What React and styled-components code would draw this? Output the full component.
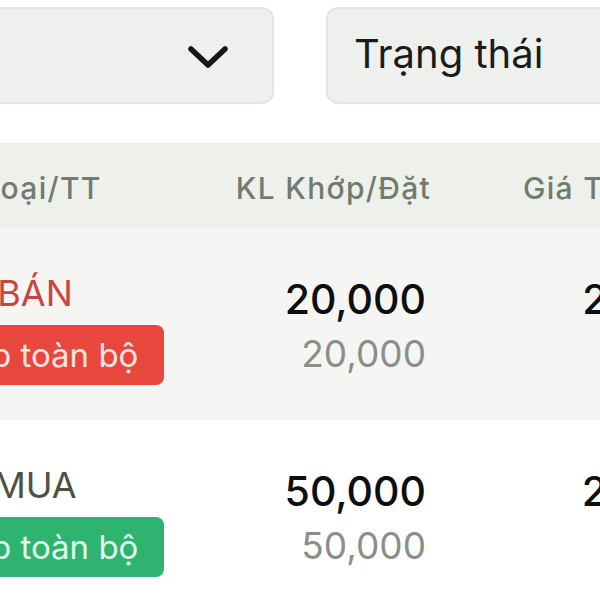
import React from 'react';
import styled, { createGlobalStyle } from 'styled-components';

const GlobalStyle = createGlobalStyle`
  html, body {
    margin: 0;
    padding: 0;
    background: #fff;
  }
  body {
    font-family: Inter, "Noto Sans", "DejaVu Sans", sans-serif;
    overflow: hidden;
  }
`;

const orders = [
  { side: 'BÁN', type: 'sell', matched: '20,000', placed: '20,000', price: '25,500', priceSub: '25,500', status: 'Khớp toàn bộ' },
  { side: 'MUA', type: 'buy', matched: '50,000', placed: '50,000', price: '24,800', priceSub: '24,800', status: 'Khớp toàn bộ' },
];

const App = () => {
  return (
    <>
      <GlobalStyle />
      <Screen>
        <Filters>
          <Select>
            <Chevron viewBox="0 0 40 24">
              <polyline points="3,4 20,20 37,4" />
            </Chevron>
          </Select>
          <Select $wide>
            <SelectText>Trạng thái</SelectText>
          </Select>
        </Filters>

        <Table>
          <HeadRow>
            <HeadCell $align="center">Loại/TT</HeadCell>
            <HeadCell $align="right" $pull>KL Khớp/Đặt</HeadCell>
            <HeadCell $align="left" $indent={97}>Giá TB/Đặt</HeadCell>
          </HeadRow>

          {orders.map((o, i) => (
            <Row key={i} $striped={i % 2 === 0}>
              <SideCell>
                <Side $type={o.type}>{o.side}</Side>
                <Badge $type={o.type}>{o.status}</Badge>
              </SideCell>
              <NumCell>
                <Main>{o.matched}</Main>
                <Sub>{o.placed}</Sub>
              </NumCell>
              <NumCell>
                <Main>{o.price}</Main>
                <Sub>{o.priceSub}</Sub>
              </NumCell>
            </Row>
          ))}
        </Table>
      </Screen>
    </>
  );
};

const Screen = styled.div`
  width: 600px;
  height: 600px;
  overflow: hidden;
  padding-top: 7px;
  box-sizing: border-box;
`;

const Filters = styled.div`
  display: flex;
  gap: 52px;
  margin-left: -100px;
  width: 800px;
`;

const Select = styled.div`
  flex: 0 0 374px;
  height: 97px;
  box-sizing: border-box;
  background: #eef0ed;
  border: 2px solid #e3e5e2;
  border-radius: 12px;
  display: flex;
  align-items: center;
  justify-content: ${({ $wide }) => ($wide ? 'flex-start' : 'flex-end')};
  padding: ${({ $wide }) => ($wide ? '0 0 4px 26px' : '0 44px 0 0')};
`;

const Chevron = styled.svg`
  width: 40px;
  height: 24px;
  margin-bottom: -2px;
  fill: none;
  stroke: #161616;
  stroke-width: 5.5;
  stroke-linecap: round;
  stroke-linejoin: round;
`;

const SelectText = styled.span`
  font-size: 40px;
  color: #1b1b1b;
  font-weight: 400;
`;

const Table = styled.div`
  margin-top: 39px;
  margin-left: -100px;
  width: 822px;
`;

const grid = `
  display: grid;
  grid-template-columns: 284px 242px 296px;
`;

const HeadRow = styled.div`
  ${grid}
  height: 85px;
  align-items: center;
  background: #eef0ec;
`;

const HeadCell = styled.div`
  text-align: ${({ $align }) => $align};
  padding-left: ${({ $indent }) => ($indent ? `${$indent}px` : 0)};
  margin-right: ${({ $pull }) => ($pull ? '-5px' : 0)};
  font-size: 30px;
  font-weight: 500;
  letter-spacing: 1.3px;
  color: #737b71;
  white-space: nowrap;
  padding-top: 4px;
`;

const Row = styled.div`
  ${grid}
  height: 192px;
  box-sizing: border-box;
  padding-top: 43px;
  align-items: start;
  background: ${({ $striped }) => ($striped ? '#f5f6f4' : '#fff')};
`;

const SideCell = styled.div`
  display: flex;
  flex-direction: column;
  align-items: center;
  gap: 10px;
`;

const Side = styled.div`
  font-size: 36px;
  line-height: 44px;
  margin-right: 14px;
  color: ${({ $type }) => ($type === 'sell' ? '#c8463f' : '#4b5340')};
`;

const Badge = styled.div`
  height: 60px;
  display: flex;
  align-items: center;
  padding: 0 26px 0 10px;
  border-radius: 8px;
  font-size: 33px;
  white-space: nowrap;
  background: ${({ $type }) => ($type === 'sell' ? '#e8473e' : '#2eb470')};
  color: ${({ $type }) => ($type === 'sell' ? '#fde4e1' : '#e2fbec')};
`;

const NumCell = styled.div`
  display: flex;
  flex-direction: column;
  align-items: flex-end;
  gap: 9px;
  margin-top: 4px;
`;

const Main = styled.div`
  font-size: 41px;
  line-height: 48px;
  font-weight: 450;
  color: #0e0e0e;
`;

const Sub = styled.div`
  font-size: 37px;
  line-height: 44px;
  color: #8b8e89;
`;

export default App;
